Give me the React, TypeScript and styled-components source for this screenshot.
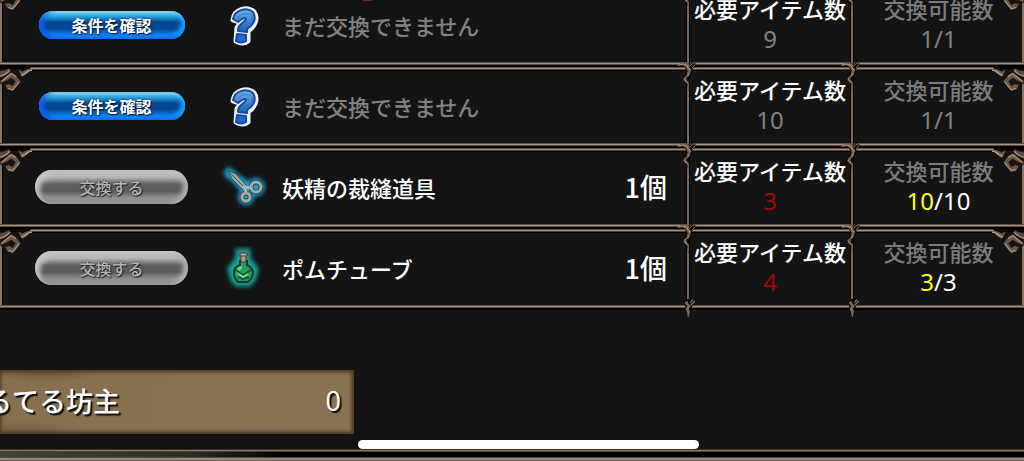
import React from "react";
import styled, { createGlobalStyle, css } from "styled-components";

const GlobalStyle = createGlobalStyle`
  * { box-sizing: border-box; }
  body {
    margin: 0;
    background: #141414;
    color: #fff;
    font-family: "Noto Sans CJK JP", sans-serif;
    font-weight: 500;
  }
`;

const Page = styled.main`
  position: relative;
  display: flex;
  flex-direction: column;
  min-height: 100vh;
  overflow: hidden;
`;

/* The list is scrolled part of the way up, so its first row is cut by the top edge. */
const ExchangeList = styled.ul`
  display: flex;
  flex-direction: column;
  gap: 4px;
  margin: -13px 0 0;
  padding: 0;
  list-style: none;
`;

const Row = styled.li`
  position: relative;
  display: grid;
  grid-template-columns: 1fr 164px 173px;
  min-height: 77px;
  border: solid #a3948a;
  border-width: 1px 0;
  box-shadow: 0 0 0 1px #5f4c40, 0 0 0 3px #000, inset 0 1px #4d4038, inset 0 -1px #5f4c40,
    inset 0 2px #000, inset 2px 0 #8b7462, inset -2px 0 #8b7462, inset 3px 0 #000;
`;

const Offer = styled.div`
  display: grid;
  grid-template-columns: 153px 94px 1fr auto;
  align-items: center;
  padding: 0 20px 2px 35px;
`;

const ActionButton = styled.button<{ $ready: boolean }>`
  justify-self: center;
  padding: 0;
  border: 0;
  border-radius: 18px;
  font-family: inherit;
  ${(p) =>
    p.$ready
      ? css`
          width: 146px;
          height: 28px;
          font-size: 16px;
          line-height: 26px;
          font-weight: 700;
          color: #fff;
          text-shadow: 1px 1px 1px #001b44, 0 0 2px #001b44;
          background: linear-gradient(#6fd0e8 0, #2ba0dd 20%, #06488f 40%, #04458d 62%, #0a78e0 82%, #1b9cff 100%);
          box-shadow: inset 5px -2px 5px #0a5cf0, inset -4px -3px 4px #16a0ff, inset 0 2px 2px #9be6ec;
        `
      : css`
          width: 153px;
          height: 34px;
          font-size: 16px;
          line-height: 34px;
          font-weight: 500;
          color: #b4b4b4;
          text-shadow: 1px 1px 1px #222, 0 0 2px #333;
          background: linear-gradient(#bdbdbd 0, #b2b2b2 22%, #606060 42%, #5a5a5a 62%, #8d8d8d 80%, #a2a2a2 92%, #6a6a6a 100%);
          box-shadow: inset 5px 4px 5px #c4c4c4, inset -5px -1px 5px #b0b0b0, inset 1px -3px 4px #777;
        `}
`;

const IconSlot = styled.span`
  display: flex;
  justify-content: center;
  padding-left: 16px;
  svg { display: block; }
`;

const ItemName = styled.span<{ $muted: boolean }>`
  font-size: 22px;
  line-height: 28px;
  white-space: nowrap;
  color: ${(p) => (p.$muted ? "#828282" : "#fff")};
`;

const Quantity = styled.span`
  font-size: 27px;
  line-height: 32px;
  white-space: nowrap;
`;

const Stat = styled.div`
  position: relative;
  padding-top: 8px;
  text-align: center;
  border-left: 2px solid #80695a;
  box-shadow: -1px 0 #000, inset 1px 0 #000;
`;

const StatName = styled.div<{ $muted?: boolean }>`
  font-size: 22px;
  line-height: 24px;
  white-space: nowrap;
  color: ${(p) => (p.$muted ? "#7c7c7c" : "#fff")};
`;

const StatValue = styled.div<{ $color: string }>`
  font-family: "Liberation Sans Narrow", "Noto Sans", sans-serif;
  font-size: 24px;
  line-height: 38px;
  font-weight: 400;
  color: ${(p) => p.$color};
`;

const Remaining = styled.span`
  color: #ff2;
`;

const Corner = styled.svg<{ $right?: boolean }>`
  position: absolute;
  top: -2px;
  ${(p) => (p.$right ? "right: 0; transform: scaleX(-1);" : "left: 0;")}
`;

const Joint = styled.svg<{ $foot?: boolean }>`
  position: absolute;
  left: -14px;
  ${(p) => (p.$foot ? "bottom: -12px;" : "top: -8px;")}
`;

const Wallet = styled.section`
  display: flex;
  justify-content: space-between;
  align-items: center;
  width: 354px;
  height: 64px;
  margin-top: 63px;
  padding: 0 13px 2px 0;
  overflow: hidden;
  font-size: 27px;
  line-height: 36px;
  white-space: nowrap;
  text-shadow: 2px 2px 1px #111, 1px 1px #111;
  background:
    radial-gradient(ellipse at 45px 0, #5b493788, transparent 60px),
    radial-gradient(ellipse at 20px 64px, #62503c88, transparent 70px),
    linear-gradient(90deg, #87704f, #8a7353);
  box-shadow: inset -2px 0 4px #4c3d29, inset 0 2px 4px #4c3d29, inset 0 -2px 4px #4c3d29;
`;

const WalletName = styled.span`
  margin-left: -42px;
`;

const WalletAmount = styled.span`
  font-family: "Liberation Sans Narrow", "Noto Sans", sans-serif;
  font-weight: 400;
`;

const FrameEdge = styled.footer`
  height: 12px;
  margin-top: auto;
  border-top: 1px solid #3d2f1f;
  background:
    linear-gradient(#8a7b66 0 1px, #4b4235 1px 2px, transparent 2px 7px, #5c463c 7px 8px, #a08475 8px 10px, #6d5f60 10px),
    linear-gradient(90deg, #3c4238, #2b302a 18%, #000 28%);
`;

const HomeIndicator = styled.div`
  position: fixed;
  left: 35%;
  bottom: 12px;
  width: 33.3%;
  height: 9px;
  border-radius: 5px;
  background: #fff;
`;

const Ember = styled.div`
  position: absolute;
  top: 0;
  left: 363px;
  width: 9px;
  height: 1px;
  background: #6b3018;
`;

function CornerOrnament({ right }: { right?: boolean }) {
  return (
    <Corner $right={right} width="32" height="26" viewBox="0 0 96 78" aria-hidden="true">
      <path d="M0 0H94L70 28L40 70L8 60L0 40Z" fill="#141414" />
      <path d="M0 0H92L86 8H0Z" fill="#080606" />
      <path d="M0 13Q17 10 27 4L31 9Q22 22 0 31Z" fill="#5f4939" />
      <path d="M0 28Q20 22 30 9" stroke="#a8907c" strokeWidth="4" fill="none" />
      <path d="M8 37L34 16L50 27L61 41L50 60L37 71L21 65L14 53L27 50L38 56L46 43L34 33L21 41L0 50V43Z" fill="#6d5545" stroke="#1d1511" strokeWidth="2" />
      <path d="M23 64L38 69L59 43M5 43L33 20L48 28" stroke="#a58e7b" strokeWidth="4" fill="none" />
      <path d="M55 7L67 14L82 6L96 7V12H90L76 24L66 29L61 20Z" fill="#735b4a" />
      <path d="M64 25L75 19L88 10H96" stroke="#b29d8c" strokeWidth="4" fill="none" />
    </Corner>
  );
}

function JointOrnament() {
  return (
    <Joint width="28" height="32" viewBox="0 0 84 96" aria-hidden="true">
      <path d="M10 11L30 4L48 8L52 20L50 35L42 47V75L36 78L32 54L24 49L35 30L28 14Z" fill="#0b0908" />
      <path d="M6 14Q18 3 35 4L43 10L44 20L49 24L44 40L36 48L34 56L42 65V92H37V69L25 57L27 49L34 44L38 31L33 19L24 13Z" fill="#765f4e" />
      <path d="M8 13Q24 6 35 12L41 23L46 28M28 55L37 64M38 47L43 37" stroke="#a89280" strokeWidth="3" fill="none" />
      <path d="M46 14L54 4M50 21L62 8" stroke="#0b0908" strokeWidth="7" />
      <path d="M45 15L54 5M51 21L61 10" stroke="#8d7665" strokeWidth="3" />
    </Joint>
  );
}

function FootOrnament() {
  return (
    <Joint $foot width="28" height="22" viewBox="0 0 84 66" aria-hidden="true">
      <path d="M29 12L47 7L55 22L47 43V58L38 63L31 37Z" fill="#0b0908" />
      <path d="M29 20L37 14L41 24L48 30L41 38L45 46L42 62H38L36 47L32 38L37 31Z" fill="#80695a" />
      <path d="M47 28L59 15M46 20L54 11" stroke="#8d7665" strokeWidth="4" />
    </Joint>
  );
}

function QuestionIcon() {
  const hook =
    "M12 15C13 9 21 8 25 11C28 15 25 19 20 21C17 22 16 24 16 26";
  return (
    <svg width="34" height="42" viewBox="0 0 34 42" aria-hidden="true">
      <defs>
        <linearGradient id="hookFill" x1="0" y1="0" x2="0" y2="1">
          <stop offset="0" stopColor="#6bb0e6" />
          <stop offset="1" stopColor="#1d63c4" />
        </linearGradient>
      </defs>
      <g strokeLinejoin="round" strokeLinecap="round" fill="none">
        <path d="M7 16C8 5 21 2 28 8C33 15 28 23 22 27L22 37Q17 41 10 37L11 24C13 19 20 19 21 15C19 12 16 16 13 18Z" stroke="#eef1f8" strokeWidth="5" fill="#eef1f8" />
        <path d="M7 15C9 5 21 3 27 8C31 15 27 21 21 25L21 28L12 27C11 20 18 20 20 15C19 12 15 16 12 18Z" fill="url(#hookFill)" stroke="#164a9b" strokeWidth="2" />
        <path d="M11 30L20 31L20 37Q16 40 10 37Z" fill="#1e68da" stroke="#164a9b" strokeWidth="2" />
        <path d={hook} stroke="#1b58aa" strokeWidth="1" opacity=".5" />
      </g>
    </svg>
  );
}

function ScissorsIcon() {
  return (
    <svg width="50" height="44" viewBox="0 0 50 44" aria-hidden="true">
      <defs>
        <filter id="scissorGlow" x="-30%" y="-30%" width="160%" height="160%">
          <feGaussianBlur stdDeviation="2" />
        </filter>
      </defs>
      <g fill="none" strokeLinecap="round" strokeLinejoin="round">
        <g stroke="#14a4d8" filter="url(#scissorGlow)">
          <path d="M11 7L29 26M11 9L31 22" strokeWidth="9" />
          <circle cx="38" cy="22" r="5" strokeWidth="8" fill="#14a4d8" />
          <circle cx="28" cy="32" r="4" strokeWidth="8" fill="#14a4d8" />
        </g>
        <path d="M10 6L14 14L25 25L29 21L18 9Z" fill="#99a9a7" stroke="#35494c" strokeWidth="1" />
        <path d="M12 8L27 23" stroke="#40575a" strokeWidth="1" />
        <circle cx="38" cy="22" r="5" stroke="#30484c" strokeWidth="5" />
        <circle cx="28" cy="32" r="4" stroke="#30484c" strokeWidth="5" />
        <path d="M27 22L33 23M26 22L28 27" stroke="#a7b3b0" strokeWidth="3" />
        <circle cx="38" cy="22" r="5" stroke="#a4adaa" strokeWidth="3" />
        <circle cx="28" cy="32" r="4" stroke="#a4adaa" strokeWidth="3" />
      </g>
    </svg>
  );
}

function PotionIcon() {
  return (
    <svg width="40" height="44" viewBox="0 0 40 44" aria-hidden="true">
      <defs>
        <filter id="potionGlow" x="-30%" y="-30%" width="160%" height="160%">
          <feGaussianBlur stdDeviation="2" />
        </filter>
      </defs>
      <path d="M15 5H25V13L33 23L31 32L26 38H14L9 32L7 23L15 13Z" fill="#18a09a" stroke="#18a09a" strokeWidth="5" filter="url(#potionGlow)" />
      <path d="M17 15H24V19Q30 22 30 27Q29 33 25 36H15Q11 32 11 27Q11 21 17 19Z" fill="#2b9d61" stroke="#103d2b" strokeWidth="2" />
      <path d="M13 24Q16 20 19 20V23Q15 24 15 30Z" fill="#5edb80" />
      <path d="M13 24L20 29L28 24M15 31L20 33L26 31" fill="none" stroke="#145033" strokeWidth="2" />
      <path d="M16 28L20 31L25 28" fill="none" stroke="#64e392" strokeWidth="2" />
      <path d="M18 8H23V16H18Z" fill="#b99b7c" stroke="#4d3a2d" strokeWidth="1" />
      <path d="M17 7H24V10H17Z" fill="#c5aa8c" stroke="#4d3a2d" strokeWidth="1" />
    </svg>
  );
}

type ExchangeItem = {
  id: number;
  name: string;
  icon: React.ReactNode;
  quantity?: string;
  cost: number;
  left: number;
  limit: number;
};

const items: ExchangeItem[] = [
  { id: 1, name: "まだ交換できません", icon: <QuestionIcon />, cost: 9, left: 1, limit: 1 },
  { id: 2, name: "まだ交換できません", icon: <QuestionIcon />, cost: 10, left: 1, limit: 1 },
  { id: 3, name: "妖精の裁縫道具", icon: <ScissorsIcon />, quantity: "1個", cost: 3, left: 10, limit: 10 },
  { id: 4, name: "ポムチューブ", icon: <PotionIcon />, quantity: "1個", cost: 4, left: 3, limit: 3 },
];

function ExchangeRow({ item, last }: { item: ExchangeItem; last: boolean }) {
  const locked = !item.quantity;
  return (
    <Row>
      <Offer>
        <ActionButton type="button" $ready={locked}>
          {locked ? "条件を確認" : "交換する"}
        </ActionButton>
        <IconSlot>{item.icon}</IconSlot>
        <ItemName $muted={locked}>{item.name}</ItemName>
        {item.quantity && <Quantity>{item.quantity}</Quantity>}
      </Offer>
      <Stat>
        <JointOrnament />
        {last && <FootOrnament />}
        <StatName>必要アイテム数</StatName>
        <StatValue $color={locked ? "#828282" : "#9c0c0c"}>{item.cost}</StatValue>
      </Stat>
      <Stat>
        <JointOrnament />
        {last && <FootOrnament />}
        <StatName $muted>交換可能数</StatName>
        <StatValue $color={locked ? "#828282" : "#fff"}>
          {locked ? item.left : <Remaining>{item.left}</Remaining>}/{item.limit}
        </StatValue>
      </Stat>
      <CornerOrnament />
      <CornerOrnament right />
    </Row>
  );
}

export default function App() {
  return (
    <>
      <GlobalStyle />
      <Page>
        <ExchangeList>
          {items.map((item, i) => (
            <ExchangeRow key={item.id} item={item} last={i === items.length - 1} />
          ))}
        </ExchangeList>
        <Wallet>
          <WalletName>てるてる坊主</WalletName>
          <WalletAmount>0</WalletAmount>
        </Wallet>
        <FrameEdge />
        <Ember />
        <HomeIndicator />
      </Page>
    </>
  );
}
